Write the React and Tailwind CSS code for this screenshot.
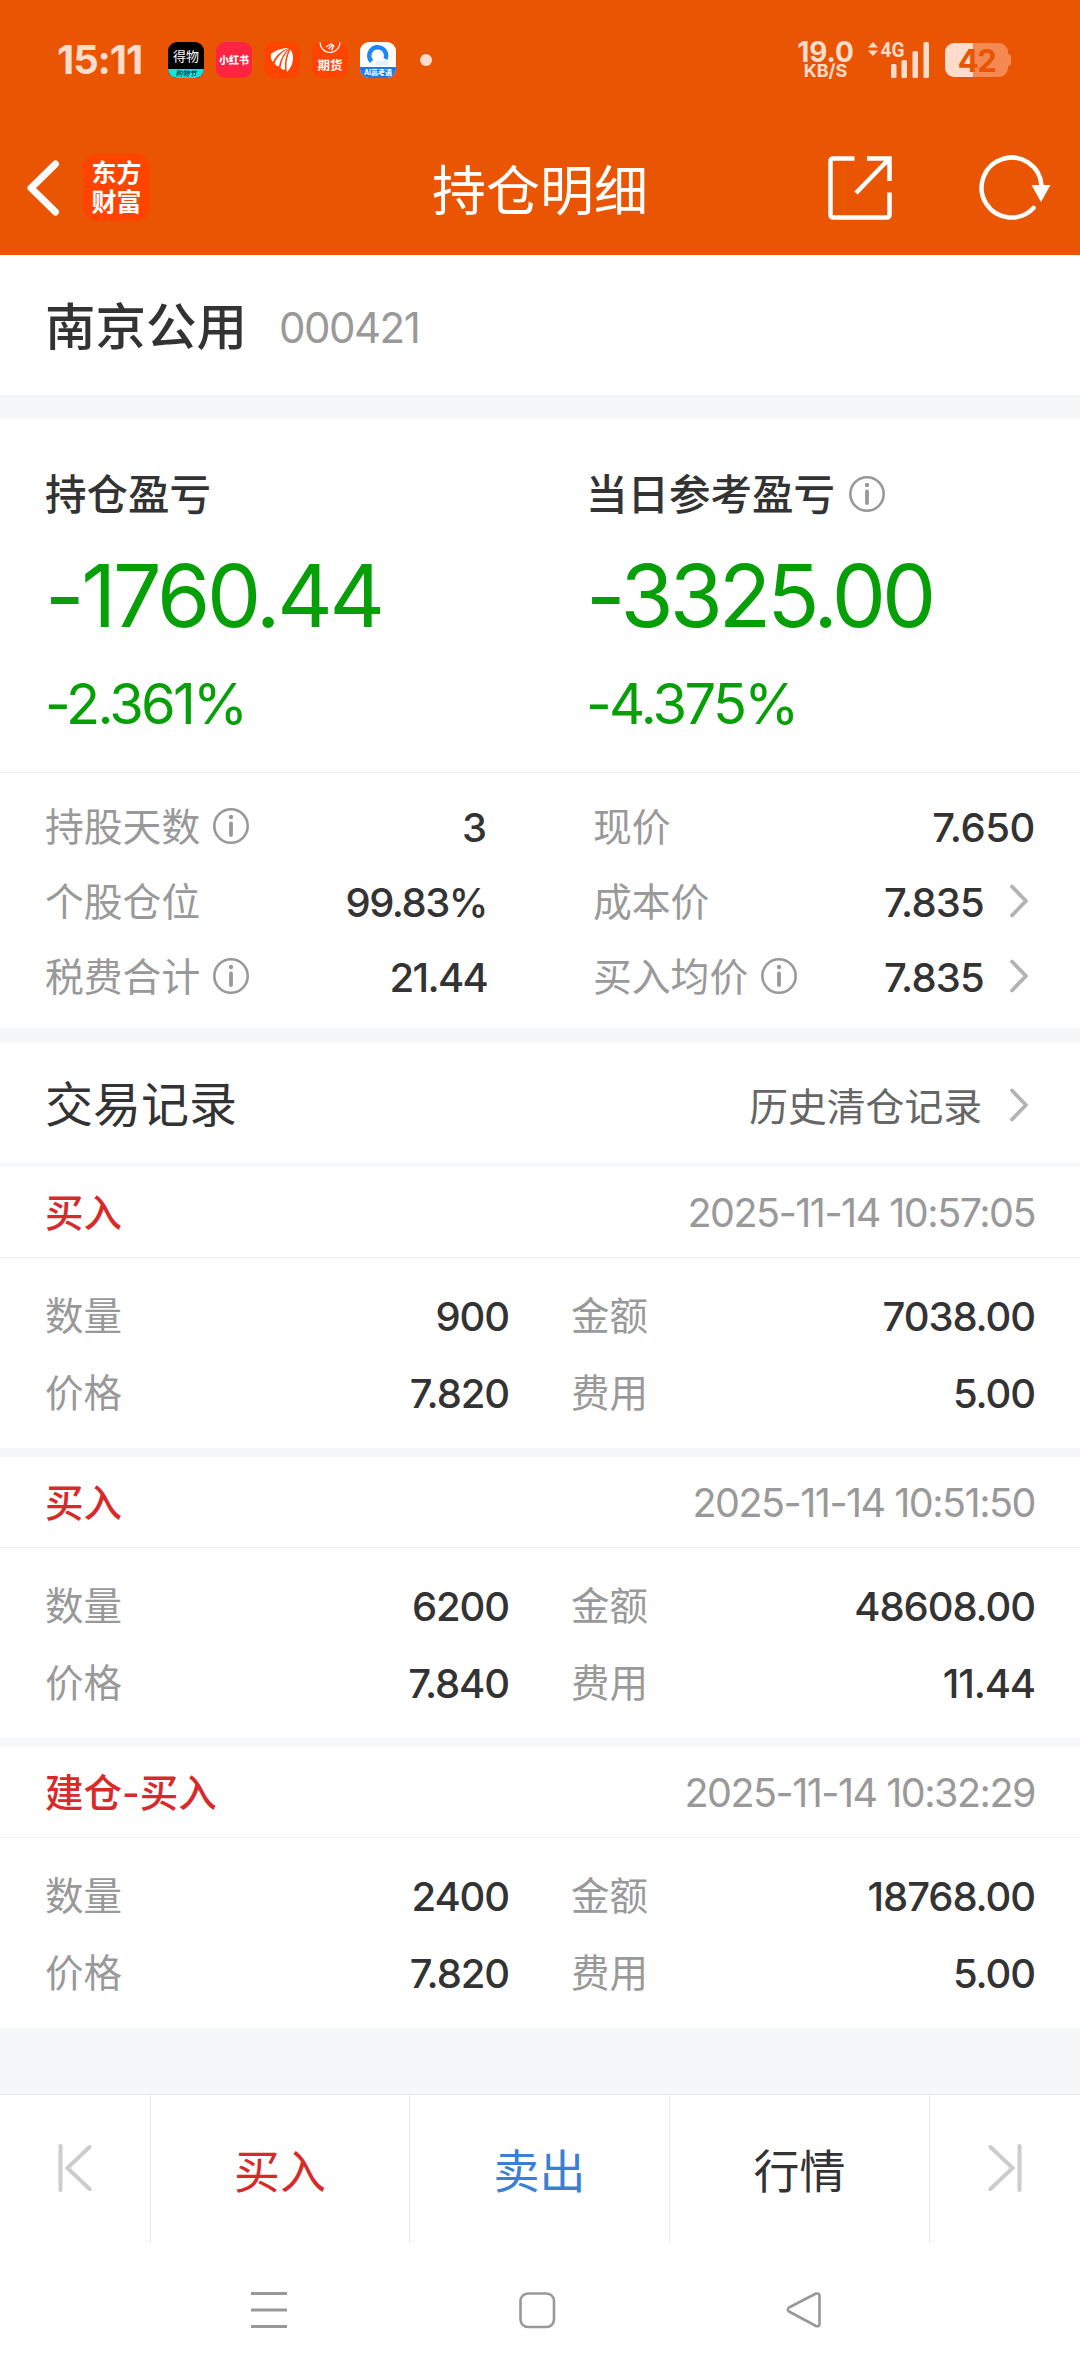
import React from 'react';

const HOLDING = [
    { label: '持股天数', info: true, value: '3', vt: 'tracking-normal' },
    { label: '现价', value: '7.650', vt: 'tracking-[-0.4px]' },
    { label: '个股仓位', value: '99.83%', vt: 'tracking-[-1.5px]' },
    { label: '成本价', value: '7.835', arrow: true, vt: 'tracking-[-0.8px]' },
    { label: '税费合计', info: true, value: '21.44', vt: 'tracking-[-1.7px]' },
    { label: '买入均价', info: true, value: '7.835', arrow: true, vt: 'tracking-[-0.8px]' },
];

const RECORDS = [
    { type: '买入', time: '2025-11-14 10:57:05', qty: '900', amount: '7038.00', price: '7.820', fee: '5.00' },
    { type: '买入', time: '2025-11-14 10:51:50', qty: '6200', amount: '48608.00', price: '7.840', fee: '11.44' },
    { type: '建仓-买入', time: '2025-11-14 10:32:29', qty: '2400', amount: '18768.00', price: '7.820', fee: '5.00' },
];

function InfoIcon() {
    return (
        <svg className="w-9 h-9 shrink-0" viewBox="0 0 36 36" fill="none">
            <circle cx="18" cy="18" r="16.7" stroke="#999" strokeWidth="2.6" />
            <circle cx="18" cy="9" r="2.2" fill="#999" />
            <path d="M18 15.500v11.500" stroke="#999" strokeWidth="3.8" strokeLinecap="round" />
        </svg>
    );
}

function Chevron() {
    return (
        <svg className="w-[20px] h-[34px] shrink-0" viewBox="0 0 20 34" fill="none">
            <path d="M3 2.500L17 17L3 31.500" stroke="#b3b3b3" strokeWidth="3.8" strokeLinecap="round" strokeLinejoin="round" />
        </svg>
    );
}

function StatusBar() {
    return (
        <div className="h-[120px] flex items-center pl-[57px] pr-[69px] text-[#ffdccb]">
            <span className="w-[111px] text-[40px] font-bold leading-none tracking-[-1.1px]">15:11</span>
            <div className="flex items-center gap-3">
                <div className="w-9 h-9 rounded-[9px] bg-black overflow-hidden flex flex-col items-center">
                    <span className="h-[27px] pt-[5px] text-[13px] leading-[18px] text-white whitespace-nowrap">得物</span>
                    <span className="w-full h-[9px] bg-[#12e5dc] text-[7px] leading-[9px] text-black text-center italic whitespace-nowrap">购物节</span>
                </div>
                <div className="w-9 h-9 rounded-[9px] bg-[#ff2442] flex items-center justify-center">
                    <span className="text-[10px] leading-none font-black text-white whitespace-nowrap">小红书</span>
                </div>
                <div className="w-9 h-9 rounded-[9px] bg-[#ff4400]">
                    <svg viewBox="0 0 36 36" className="w-9 h-9" fill="#fff">
                        <path d="M24.500 6C18 6 11 8.500 7 12C6.500 15 7 18 9 20C11.500 14 16.500 9 24.500 6Z" />
                        <path d="M25 6.500C18 9.500 13 15 10.500 21.500C12 23.500 13.500 24.500 15 24.500C16 18 20 10.500 25 6.500Z" />
                        <path d="M25.500 7C20.500 12 17.500 18 16.500 25.500C18 27.500 19.500 28 21 27.500C20.500 20 22 12 25.500 7Z" />
                        <path d="M26.500 7.500C30.500 13 30 23 23 30C21.500 23 23 14 26.500 7.500Z" />
                    </svg>
                </div>
                <div className="w-9 h-9 rounded-[9px] bg-[#ff4400] overflow-hidden flex flex-col items-center">
                    <svg viewBox="0 0 22 14" className="w-[22px] h-[14px]" fill="none" stroke="#fff">
                        <path d="M1 0A10 10.500 0 0 0 21 0" strokeWidth="1.200" />
                        <path d="M7 5L13 1.500M9.500 7L14 2.500M12.500 8.500L15 3" strokeWidth="1.400" />
                    </svg>
                    <span className="text-[12.500px] leading-[19px] font-bold text-white whitespace-nowrap">期货</span>
                </div>
                <div className="w-9 h-9 rounded-[9px] bg-white overflow-hidden flex flex-col items-center">
                    <svg viewBox="0 0 36 25" className="w-9 h-[25px]" fill="none">
                        <path d="M11.500 19.500A8.500 8.500 0 1 1 25.500 17" stroke="#1f86f5" strokeWidth="4.500" />
                        <path d="M15 23.500C14.500 19 20 17 22 19.500C25 16.500 29.500 20 28 23.500Z" fill="#e6f1ff" />
                    </svg>
                    <span className="w-full h-[11px] bg-[#1b7cea] text-[7px] leading-[12px] text-white text-center font-bold whitespace-nowrap">AI高考通</span>
                </div>
            </div>
            <div className="ml-6 w-3 h-3 rounded-full bg-[#ffdccb]" />
            <div className="ml-auto flex flex-col items-center">
                <span className="text-[28px] font-bold leading-[22px]">19.0</span>
                <span className="text-[18px] font-bold leading-[16px]">KB/S</span>
            </div>
            <svg className="ml-3 w-[64px] h-[50px]" viewBox="0 -6 64 50" fill="#ffdccb">
                <path d="M7 1L12 6.500H2ZM7 15L12 9.500H2Z" />
                <text x="14.500" y="15.500" fontSize="21" fontWeight="700" textLength="24" lengthAdjust="spacingAndGlyphs" className="font-['Roboto',sans-serif]">4G</text>
                <rect x="25" y="23" width="5.500" height="14" rx="1.500" />
                <rect x="35.500" y="19" width="5.500" height="18" rx="1.500" />
                <rect x="46.500" y="10" width="5.500" height="27" rx="1.500" />
                <rect x="57.500" y="1" width="5.500" height="36" rx="1.500" />
            </svg>
            <div className="ml-[15px] flex items-center">
                <div className="w-[63px] h-[34px] rounded-[9px] bg-linear-to-r from-[#ffdccb] from-44% to-[#f48a51] to-44% flex items-center justify-center text-[31px] leading-none font-bold tracking-[-1.5px] text-[#ea5504]">42</div>
                <div className="w-[3px] h-3 rounded-r bg-[#f48a51]" />
            </div>
        </div>
    );
}

function TitleBar() {
    return (
        <div className="h-[135px] flex items-center pl-[26px] pr-[28px] text-white">
            <svg className="w-[34px] h-[56px]" viewBox="0 0 34 56" fill="none">
                <path d="M29.500 4L5 28L29.500 52" stroke="#fff" strokeWidth="7" strokeLinecap="round" strokeLinejoin="round" />
            </svg>
            <div className="ml-[23px] w-[67px] h-[67px] rounded-[14px] bg-[#ff4400] flex flex-col items-center justify-center text-[25px] leading-[29px] font-bold">
                <span>东方</span>
                <span>财富</span>
            </div>
            <h1 className="flex-1 pl-[282px] pt-[8px] text-[54px] leading-none">持仓明细</h1>
            <svg className="w-[64px] h-[64px]" viewBox="0 0 64 64" fill="none" stroke="#fff" strokeWidth="4.500">
                <path d="M26.500 2.500H5.500Q2.500 2.500 2.500 5.500V58.500Q2.500 61.500 5.500 61.500H58.500Q61.500 61.500 61.500 58.500V36.500" />
                <path d="M39 2.500H61.500V25M61 3L28 37" />
            </svg>
            <svg className="ml-[86px] w-[74px] h-[68px]" viewBox="0 0 74 68" fill="none">
                <path d="M63.500 31.500A30 30 0 1 0 55.500 54" stroke="#fff" strokeWidth="4.500" strokeLinecap="round" />
                <path d="M53.500 31H72.500L63 48Z" fill="#fff" />
            </svg>
        </div>
    );
}

function Profit({ title, info, value, rate, vt, rt }) {
    return (
        <div className="w-[541px] shrink-0">
            <div className="h-[42px] flex items-center gap-[14px] text-[41.500px] leading-none font-medium text-[#333]">
                <span>{title}</span>
                {info && <span className="-mt-1"><InfoIcon /></span>}
            </div>
            <div className={`mt-[37px] h-[84px] text-[86px] leading-[84px] ${vt}`}>{value}</div>
            <div className={`mt-[36px] h-[60px] text-[56px] leading-[60px] ${rt}`}>{rate}</div>
        </div>
    );
}

function Record({ r }) {
    const cells = [
        ['数量', r.qty],
        ['金额', r.amount],
        ['价格', r.price],
        ['费用', r.fee],
    ];
    return (
        <section className="bg-white h-[281px]">
            <div className="h-[91px] border-b border-[#f2f3f4] pt-[4px] px-[45px] flex items-center justify-between">
                <span className="text-[38.500px] font-medium text-[#d82a2a]">{r.type}</span>
                <span className="text-[39.500px] tracking-[-1.5px] text-[#999]">{r.time}</span>
            </div>
            <div className="pt-5 px-[45px] grid grid-cols-[464px_464px] gap-x-[62px]">
                {cells.map(([k, v]) => (
                    <div key={k} className="h-[77px] flex items-center justify-between text-[38.500px]">
                        <span className="text-[#999]">{k}</span>
                        <span className="text-[40px] font-medium tracking-[-1.1px] text-[#333]">{v}</span>
                    </div>
                ))}
            </div>
        </section>
    );
}

function BottomBar() {
    return (
        <div className="h-[149px] bg-white border-t border-[#e6e8eb] grid grid-cols-[151px_259px_260px_260px_150px] text-[46px] text-[#333] [&>*]:flex [&>*]:items-center [&>*]:justify-center [&>*]:border-r [&>*]:border-[#eaeaec] [&>*]:pt-[4px]">
            <div className="pt-0!">
                <svg className="w-[34px] h-[50px]" viewBox="0 0 34 50" fill="none" stroke="#ccc" strokeWidth="4" strokeLinecap="round">
                    <path d="M2.500 2V46M31.500 3L9.500 24L31.500 45" />
                </svg>
            </div>
            <div className="text-[#d82a2a]">买入</div>
            <div className="text-[#3a7fd5]">卖出</div>
            <div>行情</div>
            <div className="border-r-0! pt-0!">
                <svg className="w-[34px] h-[50px]" viewBox="0 0 34 50" fill="none" stroke="#ccc" strokeWidth="4" strokeLinecap="round">
                    <path d="M31.500 2V46M2.500 3L24.500 24L2.500 45" />
                </svg>
            </div>
        </div>
    );
}

function SystemNav() {
    return (
        <div className="h-[133px] bg-white flex items-center pl-[250px] gap-[230px]">
            <svg className="w-[38px] h-[38px]" viewBox="0 0 38 38" stroke="#999" strokeWidth="3">
                <path d="M1 2.500H37M1 19H37M1 35.500H37" />
            </svg>
            <svg className="w-[38px] h-[38px]" viewBox="0 0 38 38" fill="none" stroke="#999" strokeWidth="2.600">
                <rect x="2.500" y="2.500" width="33.500" height="33.500" rx="7.500" />
            </svg>
            <svg className="w-[38px] h-[38px]" viewBox="0 0 38 38" fill="none" stroke="#999" strokeWidth="2.600" strokeLinejoin="round">
                <path d="M30 2.500L3 16.500Q0.500 18.500 3 20.500L30 35Q33.500 36 33.500 33V5Q33.500 2 30 2.500Z" />
            </svg>
        </div>
    );
}

export default function App() {
    return (
        <div className="w-[1080px] h-[2376px] overflow-hidden bg-[#f6f7f9] flex flex-col font-['Inter','Noto_Sans_CJK_SC',sans-serif]">
            <header className="h-[255px] bg-[#ea5504]">
                <StatusBar />
                <TitleBar />
            </header>

            <section className="h-[140px] bg-white flex items-center pt-1 pl-[45px] gap-[32px]">
                <span className="text-[50.500px] font-medium text-[#333]">南京公用</span>
                <span className="text-[42px] tracking-[-1.500px] text-[#999]">000421</span>
            </section>

            <section className="mt-6 h-[354px] bg-white border-b border-[#f2f3f4] flex pt-[56px] pl-[45px] text-[#079f07]">
                <Profit title="持仓盈亏" value="-1760.44" rate="-2.361%" vt="tracking-[-3.300px]" rt="tracking-[-2.800px]" />
                <Profit title="当日参考盈亏" info value="-3325.00" rate="-4.375%" vt="tracking-[-4px]" rt="tracking-[-2.700px]" />
            </section>

            <section className="h-[255px] bg-white pt-[17px] pl-[45px] pr-[46px] grid grid-cols-[442px_442px] content-start gap-x-[106px]">
                {HOLDING.map((h) => (
                    <div key={h.label} className="h-[75px] flex items-center">
                        <span className="text-[38.800px] text-[#999]">{h.label}</span>
                        {h.info && <span className="ml-[13px] -mt-1"><InfoIcon /></span>}
                        <span className={`ml-auto text-[40px] font-medium text-[#333] ${h.vt}`}>{h.value}</span>
                        {h.arrow && <span className="ml-[25px] mr-[6px] -mt-1"><Chevron /></span>}
                    </div>
                ))}
            </section>

            <section className="mt-[15px] h-[120px] bg-white flex items-center pt-[3px] pl-[45px] pr-[51px]">
                <h2 className="text-[48px] text-[#333]">交易记录</h2>
                <span className="ml-auto pt-[5px] text-[38.800px] text-[#666]">历史清仓记录</span>
                <span className="ml-[27px]"><Chevron /></span>
            </section>

            <div className="mt-1 flex flex-col gap-[9px]">
                {RECORDS.map((r) => (
                    <Record key={r.time} r={r} />
                ))}
            </div>

            <footer className="mt-auto">
                <BottomBar />
                <SystemNav />
            </footer>
        </div>
    );
}
